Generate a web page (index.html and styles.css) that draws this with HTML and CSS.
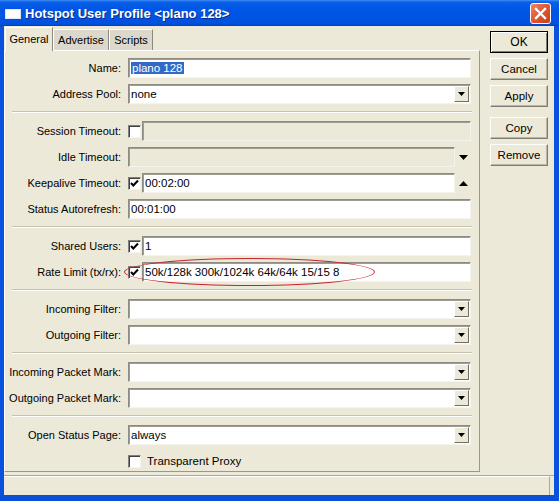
FILE: index.html
```html
<!DOCTYPE html>
<html>
<head>
<meta charset="utf-8">
<title>Hotspot User Profile</title>
<link rel="stylesheet" href="styles.css">
</head>
<body>
<div class="window">
  <div class="titlebar">
    <span class="appicon"></span>
    <span class="title">Hotspot User Profile &lt;plano 128&gt;</span>
    <span class="close"><svg width="19" height="19" viewBox="0 0 19 19"><path d="M5 5L14 14M14 5L5 14" stroke="#fff" stroke-width="2.3" stroke-linecap="square"/></svg></span>
  </div>
  <div class="frame">
    <div class="content">
      <div class="tabarea">
        <div class="tabs">
          <div class="tab active">General</div>
          <div class="tab t-adv">Advertise</div>
          <div class="tab t-scr">Scripts</div>
        </div>
        <div class="panel">
          <div class="group">
            <div class="row"><span class="label">Name:</span><span class="input"><span class="val"><span class="sel">plano 128</span></span></span></div>
            <div class="row"><span class="label">Address Pool:</span><span class="input"><span class="val">none</span><span class="ddbtn"><svg width="7" height="4" viewBox="0 0 7 4"><path d="M0 0H7L3.5 4Z" fill="#000"/></svg></span></span></div>
          </div>
          <div class="sep"></div>
          <div class="group">
            <div class="row"><span class="label">Session Timeout:</span><span class="cb"></span><span class="input disabled"></span></div>
            <div class="row"><span class="label">Idle Timeout:</span><span class="input disabled"></span><span class="spin"><svg width="9" height="5" viewBox="0 0 9 5"><path d="M0 0H9L4.5 5Z" fill="#000"/></svg></span></div>
            <div class="row"><span class="label">Keepalive Timeout:</span><span class="cb"><svg width="11" height="11" viewBox="0 0 11 11"><path d="M2 5L4.3 7.5L9 2.5" fill="none" stroke="#000" stroke-width="2"/></svg></span><span class="input"><span class="val">00:02:00</span></span><span class="spin"><svg width="9" height="5" viewBox="0 0 9 5"><path d="M0 5H9L4.5 0Z" fill="#000"/></svg></span></div>
            <div class="row"><span class="label">Status Autorefresh:</span><span class="input"><span class="val">00:01:00</span></span></div>
          </div>
          <div class="sep"></div>
          <div class="group">
            <div class="row"><span class="label">Shared Users:</span><span class="cb"><svg width="11" height="11" viewBox="0 0 11 11"><path d="M2 5L4.3 7.5L9 2.5" fill="none" stroke="#000" stroke-width="2"/></svg></span><span class="input"><span class="val">1</span></span></div>
            <div class="row rate"><span class="label">Rate Limit (tx/rx):</span><span class="cb"><svg width="11" height="11" viewBox="0 0 11 11"><path d="M2 5L4.3 7.5L9 2.5" fill="none" stroke="#000" stroke-width="2"/></svg></span><span class="input"><span class="val">50k/128k 300k/1024k 64k/64k 15/15 8</span></span><span class="ellipse"></span></div>
          </div>
          <div class="sep"></div>
          <div class="group">
            <div class="row"><span class="label">Incoming Filter:</span><span class="input"><span class="val"></span><span class="ddbtn"><svg width="7" height="4" viewBox="0 0 7 4"><path d="M0 0H7L3.5 4Z" fill="#000"/></svg></span></span></div>
            <div class="row"><span class="label">Outgoing Filter:</span><span class="input"><span class="val"></span><span class="ddbtn"><svg width="7" height="4" viewBox="0 0 7 4"><path d="M0 0H7L3.5 4Z" fill="#000"/></svg></span></span></div>
          </div>
          <div class="sep"></div>
          <div class="group">
            <div class="row"><span class="label">Incoming Packet Mark:</span><span class="input"><span class="val"></span><span class="ddbtn"><svg width="7" height="4" viewBox="0 0 7 4"><path d="M0 0H7L3.5 4Z" fill="#000"/></svg></span></span></div>
            <div class="row"><span class="label">Outgoing Packet Mark:</span><span class="input"><span class="val"></span><span class="ddbtn"><svg width="7" height="4" viewBox="0 0 7 4"><path d="M0 0H7L3.5 4Z" fill="#000"/></svg></span></span></div>
          </div>
          <div class="sep"></div>
          <div class="group">
            <div class="row"><span class="label">Open Status Page:</span><span class="input"><span class="val">always</span><span class="ddbtn"><svg width="7" height="4" viewBox="0 0 7 4"><path d="M0 0H7L3.5 4Z" fill="#000"/></svg></span></span></div>
            <div class="row"><span class="label"></span><span class="cb"></span><span class="cblabel">Transparent Proxy</span></div>
          </div>
        </div>
      </div>
      <div class="buttons">
        <div class="btn default">OK</div>
        <div class="btn">Cancel</div>
        <div class="btn">Apply</div>
        <div class="btn gap">Copy</div>
        <div class="btn">Remove</div>
      </div>
    </div>
    <div class="statusbar"><div class="pane"></div></div>
  </div>
</div>
</body>
</html>
```
FILE: styles.css
```css
* { box-sizing: border-box; }
html, body { margin: 0; padding: 0; }
body {
  width: 559px;
  height: 501px;
  overflow: hidden;
  font-family: "Liberation Sans", Arial, sans-serif;
  font-size: 11px;
  color: #000;
  background: #ece9d8;
}
.window {
  width: 559px;
  height: 501px;
  display: flex;
  flex-direction: column;
}
.titlebar {
  height: 26px;
  flex: none;
  display: flex;
  align-items: center;
  padding: 0 8px 0 5px;
  background: linear-gradient(to bottom, #3d8ef5 0px, #0b5fe8 2px, #0056e6 30%, #0054e3 70%, #0050dc 92%, #003fbf 100%);
}
.appicon {
  width: 16px;
  height: 10px;
  background: #fff;
  border: 1px solid #dde6f8;
  flex: none;
  margin-top: 1px;
}
.title {
  margin-left: 4px;
  color: #fff;
  font-weight: bold;
  font-size: 13px;
  text-shadow: 1px 1px 0 #0b2a8a;
  white-space: nowrap;
}
.close {
  margin-left: auto;
  width: 21px;
  height: 21px;
  border: 1px solid #fff;
  border-radius: 3px;
  background: linear-gradient(135deg, #f0866a 0%, #e05a35 45%, #c8401c 100%);
  display: flex;
  align-items: center;
  justify-content: center;
}
.frame {
  flex: 1;
  display: flex;
  flex-direction: column;
  border-left: 4px solid #0a52de;
  border-right: 5px solid #0a52de;
  border-bottom: 6px solid #0a4fd6;
  background: #ece9d8;
}
.content {
  flex: 1;
  display: flex;
  padding-top: 1px;
  min-height: 0;
}
.tabarea {
  width: 476px;
  flex: none;
  display: flex;
  flex-direction: column;
}
.tabs {
  height: 23px;
  flex: none;
  display: flex;
  align-items: flex-end;
  padding-left: 1px;
}
.tab {
  height: 21px;
  display: flex;
  align-items: center;
  justify-content: center;
  background: #dcd9cc;
  border-top: 1px solid #fff;
  border-left: 1px solid #fff;
  border-right: 1px solid #8c8a80;
  white-space: nowrap;
}
.tab.active {
  height: 24px;
  width: 48px;
  background: #ece9d8;
  margin-bottom: -1px;
  position: relative;
  z-index: 1;
  padding-bottom: 2px;
}
.t-adv { width: 56px; }
.t-scr { width: 44px; }
.panel {
  flex: 1;
  border: 1px solid;
  border-color: #fff #9a988d #9a988d #fff;
  padding: 7px 8px 0 0;
  display: flex;
  flex-direction: column;
}
.group {
  display: flex;
  flex-direction: column;
  gap: 6px;
}
.sep {
  height: 2px;
  margin: 7px -1px 8px 7px;
  border-top: 1px solid #c5c2b2;
  border-bottom: 1px solid #fff;
}
.row {
  height: 20px;
  display: flex;
  align-items: center;
}
.label {
  width: 116px;
  flex: none;
  margin-right: 7px;
  text-align: right;
  white-space: nowrap;
}
.input {
  flex: 1;
  height: 20px;
  display: flex;
  align-items: center;
  background: #fff;
  border: 1px solid;
  border-color: #8d8b82 #f4f3ee #f4f3ee #8d8b82;
  box-shadow: inset 1px 1px 0 #9d9b92;
  font-size: 11.5px;
  min-width: 0;
}
.input.disabled { background: #ece9d8; }
.val {
  flex: 1;
  padding-left: 2px;
  white-space: nowrap;
  overflow: hidden;
}
.sel {
  background: #316ac5;
  color: #fff;
  padding: 1px 1px;
}
.ddbtn {
  width: 15px;
  height: 16px;
  flex: none;
  margin-right: 1px;
  background: #ece9d8;
  border: 1px solid;
  border-color: #fff #6f6d64 #6f6d64 #fff;
  display: flex;
  align-items: center;
  justify-content: center;
}
.spin {
  width: 16px;
  flex: none;
  display: flex;
  justify-content: center;
  align-items: center;
}
.cb {
  width: 13px;
  height: 13px;
  flex: none;
  margin-right: 1px;
  background: #fff;
  border: 1px solid;
  border-color: #808080 #f4f3ee #f4f3ee #808080;
  box-shadow: inset 1px 1px 0 #404040;
  display: flex;
  align-items: center;
  justify-content: center;
}
.cblabel {
  margin-left: 5px;
  font-size: 11.5px;
}
.rate { position: relative; }
.ellipse {
  position: absolute;
  left: 119px;
  top: -4px;
  width: 251px;
  height: 28px;
  border: 1.5px solid #c5252e;
  border-radius: 50%;
  pointer-events: none;
}
.buttons {
  width: 58px;
  flex: none;
  margin-left: 10px;
  padding-top: 4px;
  display: flex;
  flex-direction: column;
  gap: 5px;
}
.btn {
  height: 22px;
  display: flex;
  align-items: center;
  justify-content: center;
  font-size: 11.5px;
  background: #ece9d8;
  border: 1px solid;
  border-color: #fdfdfb #807e74 #807e74 #fdfdfb;
  box-shadow: inset -1px -1px 0 #b9b6a8;
}
.btn.default {
  border: 1px solid #000;
  box-shadow: inset 1px 1px 0 #fff, inset -1px -1px 0 #807e74;
  font-size: 12px;
}
.btn.gap { margin-top: 5px; }
.statusbar {
  height: 20px;
  flex: none;
  margin-top: 3px;
  border-top: 1px solid #aca899;
  display: flex;
}
.pane {
  width: 546px;
  height: 100%;
  border-top: 1px solid #fff;
  border-right: 1px solid #aca899;
}
```
